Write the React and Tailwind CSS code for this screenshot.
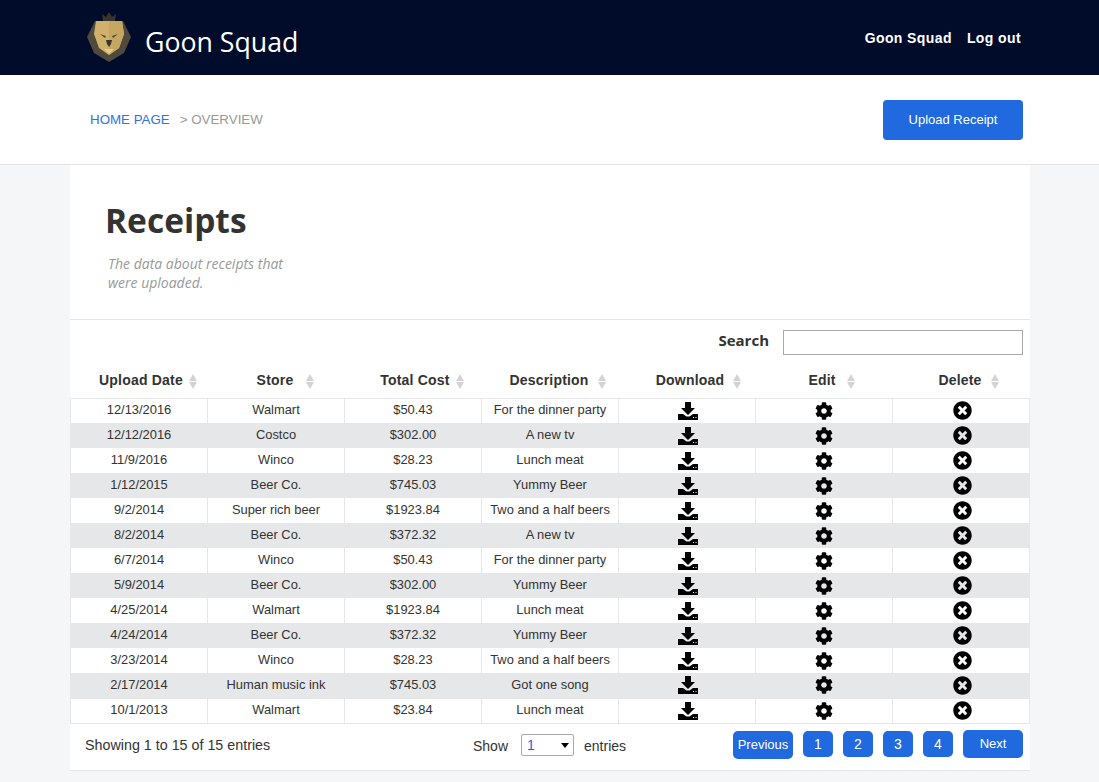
import React from 'react';
import { FaCog, FaTimesCircle } from 'react-icons/fa';

const receipts = [
  ['12/13/2016', 'Walmart', '$50.43', 'For the dinner party'],
  ['12/12/2016', 'Costco', '$302.00', 'A new tv'],
  ['11/9/2016', 'Winco', '$28.23', 'Lunch meat'],
  ['1/12/2015', 'Beer Co.', '$745.03', 'Yummy Beer'],
  ['9/2/2014', 'Super rich beer', '$1923.84', 'Two and a half beers'],
  ['8/2/2014', 'Beer Co.', '$372.32', 'A new tv'],
  ['6/7/2014', 'Winco', '$50.43', 'For the dinner party'],
  ['5/9/2014', 'Beer Co.', '$302.00', 'Yummy Beer'],
  ['4/25/2014', 'Walmart', '$1923.84', 'Lunch meat'],
  ['4/24/2014', 'Beer Co.', '$372.32', 'Yummy Beer'],
  ['3/23/2014', 'Winco', '$28.23', 'Two and a half beers'],
  ['2/17/2014', 'Human music ink', '$745.03', 'Got one song'],
  ['10/1/2013', 'Walmart', '$23.84', 'Lunch meat'],
];

const columns = [
  { label: 'Upload Date', cell: 'pl-[18px]', arrows: 'ml-[6px]' },
  { label: 'Store', cell: 'pl-[19px]', arrows: 'ml-[13px]' },
  { label: 'Total Cost', cell: 'pl-[18px]', arrows: 'ml-[6px]' },
  { label: 'Description', cell: 'pl-[15px]', arrows: 'ml-[9px]' },
  { label: 'Download', cell: 'pl-[23px]', arrows: 'ml-[9px]' },
  { label: 'Edit', cell: 'pl-[15px]', arrows: 'ml-[11px]' },
  { label: 'Delete', cell: 'pl-[15px]', arrows: 'ml-[9px]' },
];

const Logo = () => (
  <svg width="44" height="50" viewBox="0 0 44 50" className="shrink-0">
    <path d="M16 9 L15 2 L19 5 L22 0 L25 5 L29 2 L28 9 Z" fill="#39352c" />
    <path d="M8 9 L36 9 L44 25 L37 41 L22 50 L7 41 L0 25 Z" fill="#4f4a3c" />
    <path d="M9 9 L35 9 L37 22 L32 36 L22 43 L12 36 L7 22 Z" fill="#d0b16c" />
    <path d="M22 9 L35 9 L37 22 L32 36 L22 43 Z" fill="#c6a761" />
    <path d="M13 22 L19 24 L18 26 Z M31 22 L25 24 L26 26 Z" fill="#4f4a3c" />
    <path d="M19 28 L25 28 L24 32 L22 35 L20 32 Z" fill="#39352c" />
    <path d="M17 37 L27 37 L22 42 Z" fill="#e3c98a" />
  </svg>
);

// tray with two small holes and the arrow dropping into its notch
const DownloadIcon = () => (
  <svg width="20" height="18" viewBox="0 0 20 18" className="mx-auto block" fill="#000">
    <path d="M7 0 H13 V6 H17 L10 13 L3 6 H7 Z" />
    <path
      fillRule="evenodd"
      d="M0 12 H5 L8.5 14.5 H11.5 L15 12 H20 V18 H0 Z M15 15 V16 H16 V15 Z M17.5 15 V16 H18.5 V15 Z"
    />
  </svg>
);

const SortArrows = ({ className }) => (
  <span className={`inline-flex flex-col items-center gap-[1px] align-middle ${className}`}>
    <span className="h-0 w-0 border-x-[4.5px] border-b-[7px] border-x-transparent border-b-[#d3d3d3]" />
    <span className="h-0 w-0 border-x-[4.5px] border-t-[7px] border-x-transparent border-t-[#d3d3d3]" />
  </span>
);

const PageButton = ({ children, className = '' }) => (
  <button className={`rounded-[5px] bg-[#2069de] text-white ${className}`}>
    {children}
  </button>
);

const cellBorder = (i) =>
  `border-x border-[#e6e7e8] ${i === 0 || i === 12 ? 'border-y' : ''}`;

export default function App() {
  return (
    <div className="min-h-[782px] bg-[#f5f6f8] font-['Liberation_Sans',Arial,sans-serif] text-[#333]">
      <header className="flex h-[75px] items-center justify-between bg-[#000c2a] pl-[87px] pr-[78px]">
        <div className="flex items-center gap-[14px]">
          <Logo />
          <span className="pt-[10px] font-['Open_Sans',sans-serif] text-[26.7px] text-white">Goon Squad</span>
        </div>
        <nav className="flex gap-[15px] pt-[1px] text-sm font-bold tracking-[0.4px] text-white">
          <a>Goon Squad</a>
          <a>Log out</a>
        </nav>
      </header>

      <div className="flex h-[90px] items-center justify-between border-b border-[#e3e4e6] bg-white pl-[90px] pr-[76px]">
        <div className="text-[13.33px]">
          <a className="text-[#2f72e4]">HOME PAGE</a>
          <span className="ml-[10px] text-[#999]">&gt; OVERVIEW</span>
        </div>
        <button className="h-[40px] w-[140px] rounded-[4px] bg-[#2069de] text-[13px] text-white">
          Upload Receipt
        </button>
      </div>

      <main className="mx-[70px] w-[960px] bg-white">
        <section className="h-[155px] border-b border-[#e3e4e6] pl-[36px] pt-[33px]">
          <h1 className="-ml-[1px] font-['Open_Sans',sans-serif] text-[33.5px] font-bold leading-[44px] text-[#333]">Receipts</h1>
          <p className="mt-[12px] w-[200px] pl-[2px] font-['Open_Sans',sans-serif] text-[14px] italic leading-[19px] text-[#999]">
            The data about receipts that were uploaded.
          </p>
        </section>

        <div className="flex h-[35px] items-end justify-end gap-[14px] pr-[7px]">
          <label className="pb-[4px] font-['Open_Sans',sans-serif] text-[15px] font-bold leading-[22px]">Search</label>
          <input className="h-[25px] w-[240px] border border-[#a9a9a9] bg-white" />
        </div>

        <table className="w-full table-fixed border-collapse">
          <thead>
            <tr className="h-[43px]">
              {columns.map((col) => (
                <th key={col.label} className={`pt-[7px] text-center text-sm font-bold tracking-[0.2px] text-[#333] ${col.cell}`}>
                  {col.label}
                  <SortArrows className={col.arrows} />
                </th>
              ))}
            </tr>
          </thead>
          <tbody className="text-[12.9px]">
            {receipts.map((row, i) => (
              <tr key={i} className={`h-[25px] ${i % 2 ? 'bg-[#e6e7e8]' : 'bg-white'}`}>
                {row.map((cell, j) => (
                  <td key={j} className={`pb-[2px] text-center ${cellBorder(i)}`}>
                    {cell}
                  </td>
                ))}
                <td className={`pl-[2px] ${cellBorder(i)}`}>
                  <DownloadIcon />
                </td>
                <td className={cellBorder(i)}>
                  <FaCog className="mx-auto text-[18px] text-black" />
                </td>
                <td className={`pl-[2px] ${cellBorder(i)}`}>
                  <FaTimesCircle className="mx-auto text-[19px] text-black" />
                </td>
              </tr>
            ))}
          </tbody>
        </table>

        <footer className="flex h-[47px] items-center border-b border-[#e3e4e6] pb-[3px] pl-[15px] pr-[7px] text-[14.3px]">
          <span className="w-[388px] pt-[2px]">Showing 1 to 15 of 15 entries</span>
          <span className="pt-[2px] text-sm">Show</span>
          <div className="relative ml-[13px]">
            <select className="block h-[22px] w-[53px] appearance-none rounded-[2px] border border-[#a9a9a9] bg-white pl-[5px] text-sm text-[#2069de]">
              <option>1</option>
            </select>
            <span className="absolute right-[5px] top-[9px] h-0 w-0 border-x-[4px] border-t-[5px] border-x-transparent border-t-black" />
          </div>
          <span className="ml-[10px] pt-[2px] text-sm">entries</span>
          <div className="ml-auto flex items-center gap-[10px]">
            <PageButton className="h-[28px] w-[60px] text-[13px]">Previous</PageButton>
            <PageButton className="mb-[2px] h-[26px] w-[30px] text-sm">1</PageButton>
            <PageButton className="mb-[2px] h-[26px] w-[30px] text-sm">2</PageButton>
            <PageButton className="mb-[2px] h-[26px] w-[30px] text-sm">3</PageButton>
            <PageButton className="mb-[2px] h-[26px] w-[30px] text-sm">4</PageButton>
            <PageButton className="mb-[2px] h-[28px] w-[60px] text-[13px]">Next</PageButton>
          </div>
        </footer>
      </main>
    </div>
  );
}
